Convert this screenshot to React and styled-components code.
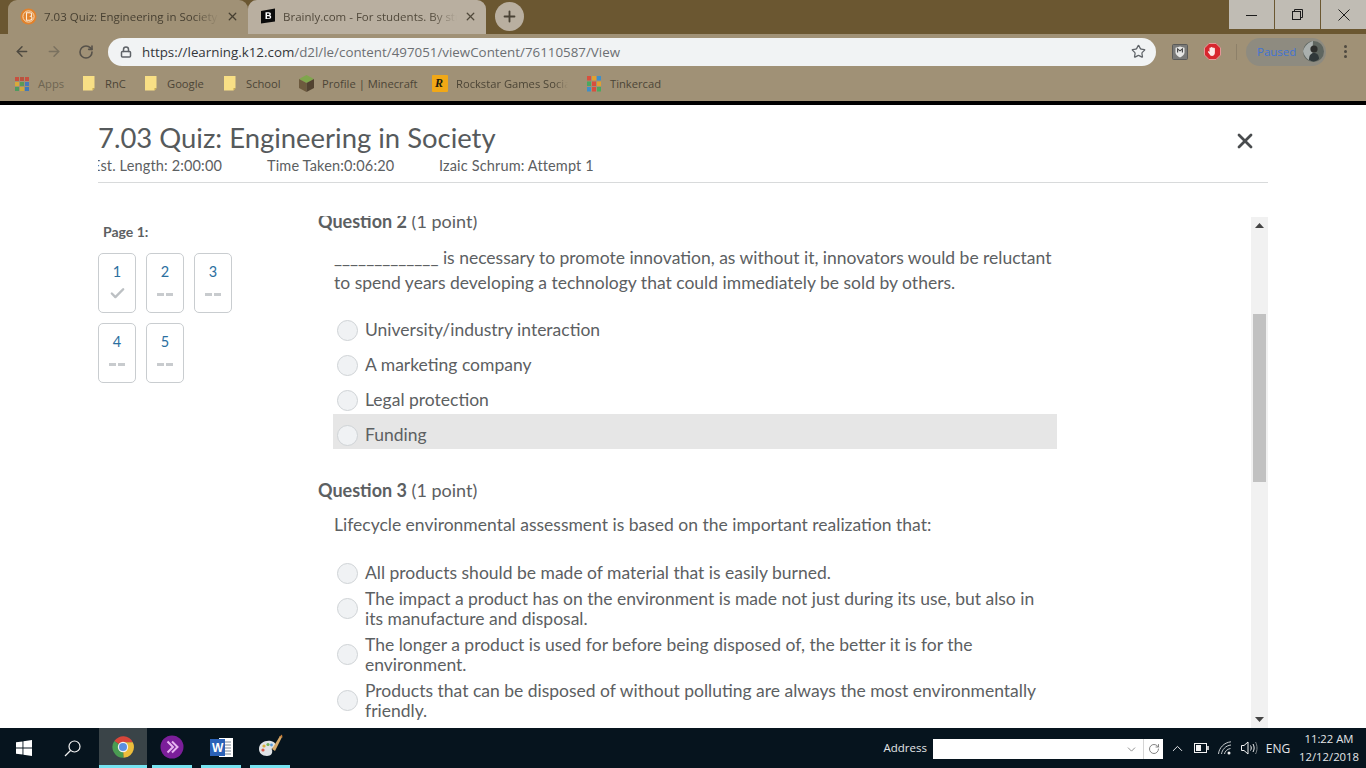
import React from "react";
import styled, { createGlobalStyle } from "styled-components";
import { ArrowLeft, ArrowRight, RotateCw, Lock, Star, X, Plus, ChevronDown, ChevronUp, Check } from "lucide-react";

const GlobalStyle = createGlobalStyle`
  html, body {
    margin: 0;
    padding: 0;
    background: #fff;
    overflow: hidden;
  }
  * { box-sizing: border-box; }
`;

const Screen = styled.div`
  width: 1366px;
  height: 768px;
  display: flex;
  flex-direction: column;
  overflow: hidden;
  font-family: "Lato", "Open Sans", sans-serif;
`;

/* browser chrome */
const TitleBar = styled.div`
  height: 34px;
  flex: none;
  display: flex;
  align-items: flex-start;
  background: #6b5731;
  padding-left: 8px;
`;

const Tab = styled.div`
  width: ${(p) => p.$width}px;
  height: 34px;
  display: flex;
  align-items: center;
  padding: 0 9px 2px 12px;
  gap: 7px;
  border-radius: 9px 9px 0 0;
  background: ${(p) => (p.$active ? "#a09176" : "#b9afa0")};
  font-family: "Open Sans", sans-serif;
  font-size: 11.5px;
  color: ${(p) => (p.$active ? "#463f31" : "#51493b")};
`;

const TabTitle = styled.span`
  flex: 1;
  white-space: nowrap;
  overflow: hidden;
  -webkit-mask-image: linear-gradient(to right, #000 85%, transparent 100%);
  mask-image: linear-gradient(to right, #000 85%, transparent 100%);
`;

const NewTab = styled.div`
  width: 29px;
  height: 29px;
  margin: 2px 0 0 9px;
  border-radius: 50%;
  background: #b9afa0;
  display: flex;
  align-items: center;
  justify-content: center;
  color: #4a4336;
`;

const WindowControls = styled.div`
  margin-left: auto;
  display: flex;
  gap: 1px;
`;

const WindowButton = styled.div`
  width: 45px;
  height: 29px;
  background: #c0bcb4;
  display: flex;
  align-items: center;
  justify-content: center;
  color: #1c1c1c;
`;

const Toolbar = styled.div`
  height: 34px;
  flex: none;
  display: flex;
  align-items: center;
  background: #a09176;
  padding: 1px 0 0 14px;
`;

const NavButton = styled.div`
  width: 16px;
  display: flex;
  justify-content: center;
  margin-right: 16px;
  color: ${(p) => p.$color};
`;

const AddressBar = styled.div`
  width: 1048px;
  height: 28px;
  margin-left: -2px;
  display: flex;
  align-items: center;
  padding: 0 10px 0 12px;
  border-radius: 14px;
  background: #f1f3f4;
  color: #5f6368;
`;

const Url = styled.div`
  flex: 1;
  margin-left: 10px;
  font-family: "Open Sans", sans-serif;
  font-size: 13.35px;
  color: #6c6f73;
  white-space: nowrap;
`;

const UrlHost = styled.span`
  color: #33363a;
`;

const ExtensionIcon = styled.svg`
  flex: none;
  margin-left: ${(p) => p.$left}px;
`;

const Divider = styled.div`
  width: 1px;
  height: 16px;
  margin-left: 15px;
  background: #8d8069;
`;

const PausedPill = styled.div`
  width: 80px;
  height: 28px;
  margin-left: 9px;
  display: flex;
  align-items: center;
  justify-content: space-between;
  padding: 0 2px 0 11px;
  border-radius: 14px;
  background: #8e8b80;
  font-family: "Open Sans", sans-serif;
  font-size: 11.5px;
  color: #4273d2;
`;

const MenuDots = styled.div`
  margin-left: 18px;
  display: flex;
  flex-direction: column;
  gap: 2px;
`;

const MenuDot = styled.span`
  width: 3px;
  height: 3px;
  border-radius: 50%;
  background: #4f4a40;
`;

const BookmarkBar = styled.div`
  height: 33px;
  flex: none;
  display: flex;
  align-items: center;
  padding: 0 0 2px 15px;
  background: #a09176;
  font-family: "Open Sans", sans-serif;
  font-size: 11.2px;
  color: #4c4536;
`;

const Bookmark = styled.div`
  flex: none;
  width: ${(p) => p.$width}px;
  display: flex;
  align-items: center;
  gap: ${(p) => p.$gap || 9}px;
  white-space: nowrap;
  color: ${(p) => p.$color || "inherit"};
`;

const FadedLabel = styled.span`
  width: 112px;
  overflow: hidden;
  -webkit-mask-image: linear-gradient(to right, #000 88%, transparent 100%);
  mask-image: linear-gradient(to right, #000 88%, transparent 100%);
`;

const BlackRule = styled.div`
  height: 4px;
  flex: none;
  background: #000;
`;

/* quiz page */
const Page = styled.main`
  flex: 1;
  min-height: 0;
  padding: 0 98px;
  display: flex;
  flex-direction: column;
  background: #fff;
  color: #5c6062;
`;

const QuizHeader = styled.header`
  flex: none;
  padding: 16px 0 6px;
  border-bottom: 1px solid #d8dadb;
`;

const TitleRow = styled.div`
  display: flex;
  align-items: center;
  justify-content: space-between;
  padding-right: 11px;
`;

const QuizTitle = styled.h1`
  margin: 0;
  font-size: 27.45px;
  line-height: 34px;
  font-weight: 400;
  color: #565a5c;
`;

const CloseIcon = styled(X)`
  color: #494c4e;
  margin-top: 6px;
`;

const MetaRow = styled.div`
  display: flex;
  margin-top: 1px;
  overflow: hidden;
  font-size: 14.5px;
  line-height: 20px;
  letter-spacing: 0.15px;
`;

const MetaItem = styled.span`
  flex: none;
  width: ${(p) => p.$width}px;
  margin-left: ${(p) => p.$left || 0}px;
  white-space: nowrap;
`;

const Body = styled.div`
  flex: 1;
  min-height: 0;
  margin-top: 34px;
  display: grid;
  grid-template-columns: 220px 933px 17px;
`;

const Sidebar = styled.aside`
  padding-top: 5px;
`;

const PageLabel = styled.div`
  padding-left: 5px;
  margin-bottom: 11px;
  font-size: 14px;
  line-height: 20px;
  font-weight: 700;
`;

const TileGrid = styled.div`
  display: grid;
  grid-template-columns: repeat(3, 38px);
  gap: 10px;
`;

const Tile = styled.div`
  height: 60px;
  padding-top: 9px;
  display: flex;
  flex-direction: column;
  align-items: center;
  border: 1px solid #c9cdd0;
  border-radius: 5px;
`;

const TileNumber = styled.span`
  font-size: 14.5px;
  line-height: 17px;
  color: #2b6f9f;
`;

const TileDashes = styled.span`
  margin-top: 13px;
  display: flex;
  gap: 2px;
`;

const TileDash = styled.span`
  flex: none;
  width: 7px;
  height: 3px;
  background: #c8cbce;
`;

const TileCheck = styled(Check)`
  margin-top: 5px;
  color: #bcc0c3;
`;

const Questions = styled.section`
  margin-top: -1px;
  overflow: hidden;
`;

const QuestionBlock = styled.div`
  margin-top: ${(p) => p.$top}px;
`;

const QuestionHeading = styled.h2`
  margin: 0;
  font-size: 18px;
  line-height: 24px;
  font-weight: 400;
`;

const HeadingStrong = styled.strong`
  font-weight: 700;
`;

const Prompt = styled.p`
  margin: ${(p) => p.$top}px 0 0;
  padding-left: 16px;
  width: 740px;
  font-size: 17.5px;
  line-height: 25px;
`;

const OptionList = styled.div`
  margin-top: ${(p) => p.$top}px;
  margin-left: 15px;
  width: 724px;
  display: flex;
  flex-direction: column;
`;

const OptionRow = styled.div`
  display: flex;
  align-items: center;
  gap: 7px;
  padding: ${(p) => (p.$wrap ? "2px 20px 4px 4px" : "7px 20px 0 4px")};
  min-height: 35px;
  background: ${(p) => (p.$hover ? "#e6e6e6" : "transparent")};
  font-size: 17.5px;
  line-height: 20px;
`;

const Radio = styled.span`
  flex: none;
  width: 21px;
  height: 21px;
  margin-top: ${(p) => (p.$wrap ? -2 : 0)}px;
  border-radius: 50%;
  border: 1px solid #cfd3d6;
  background: #f0f2f4;
`;

const ScrollTrack = styled.div`
  display: flex;
  flex-direction: column;
  align-items: center;
  background: #f1f1f1;
  color: #444;
`;

const ScrollArrow = styled.div`
  flex: none;
  height: 17px;
  margin-top: ${(p) => (p.$auto ? "auto" : "0")};
  display: flex;
  align-items: center;
  justify-content: center;
`;

const ScrollThumb = styled.div`
  flex: none;
  width: 13px;
  height: 168px;
  margin-top: 80px;
  background: #c1c1c1;
`;

/* windows taskbar */
const Taskbar = styled.footer`
  height: 40px;
  flex: none;
  display: flex;
  align-items: stretch;
  background: #06141e;
  color: #e4e6e8;
  font-family: "Open Sans", sans-serif;
`;

const ShellButton = styled.div`
  width: 48px;
  display: flex;
  align-items: center;
  justify-content: center;
`;

const AppList = styled.div`
  margin-left: 3px;
  display: flex;
`;

const AppButton = styled.div`
  width: ${(p) => (p.$active ? 48 : 40)}px;
  margin-right: ${(p) => (p.$active ? 5 : 9)}px;
  display: flex;
  align-items: center;
  justify-content: center;
  padding-top: 1px;
  background: ${(p) => (p.$active ? "#3a4448" : "transparent")};
  border-bottom: 3px solid #76e3f0;
`;

const AddressBand = styled.div`
  margin-left: auto;
  padding-top: 2px;
  display: flex;
  align-items: center;
  gap: 6px;
  font-size: 11.5px;
`;

const AddressLabel = styled.span`
  margin-bottom: 3px;
`;

const AddressInput = styled.div`
  width: 230px;
  height: 20px;
  display: flex;
  align-items: center;
  justify-content: flex-end;
  background: #fff;
  color: #777;
`;

const AddressGo = styled.span`
  width: 20px;
  height: 20px;
  margin-left: 5px;
  display: flex;
  align-items: center;
  justify-content: center;
  border-left: 1px solid #d5d5d5;
`;

const Tray = styled.div`
  display: flex;
  align-items: center;
  margin-left: 2px;
`;

const TrayCell = styled.div`
  width: ${(p) => p.$width || 24}px;
  display: flex;
  justify-content: center;
  font-size: 12px;
`;

const Clock = styled.div`
  width: 68px;
  display: flex;
  flex-direction: column;
  align-items: center;
  justify-content: center;
  font-size: 11.3px;
  line-height: 18px;
  margin-right: 3px;
`;

const D2lIcon = () => (
  <svg width="17" height="17" viewBox="0 0 17 17">
    <circle cx="8.5" cy="8.5" r="8" fill="#e2822c" />
    <circle cx="8.5" cy="8.5" r="5.6" fill="none" stroke="#f7dcb8" strokeWidth="1" />
    <path d="M6.5 4.8h3c1.6 0 2.2 1 2.2 1.9 0 .8-.4 1.3-1 1.6.8.2 1.3.9 1.3 1.8 0 1.2-.9 2.1-2.4 2.1H6.5z" fill="none" stroke="#fbeedd" strokeWidth="1.1" />
  </svg>
);

const BrainlyIcon = () => (
  <svg width="16" height="16" viewBox="0 0 16 16">
    <path d="M1 3l14-2.5v13L1 15.5z" fill="#0b0b0b" />
    <path d="M5.5 4.2h3.4c1.4 0 2 .8 2 1.7 0 .7-.4 1.2-1 1.4.8.2 1.3.8 1.3 1.7 0 1.2-.8 2-2.3 2H5.5zM7 5.4v1.6h1.5c.6 0 .9-.3.9-.8s-.3-.8-.9-.8zm0 2.8v2h1.7c.7 0 1-.4 1-1s-.3-1-1-1z" fill="#fff" />
  </svg>
);

const AppsIcon = () => (
  <svg width="14" height="14" viewBox="0 0 14 14">
    {[
      ["#c8503f", "#b8543f", "#c8503f"],
      ["#d9a93a", "#5a9a58", "#4a78b8"],
      ["#4f9a5f", "#d0a83a", "#3f78b8"],
    ].map((row, r) =>
      row.map((fill, c) => <rect key={`${r}${c}`} x={c * 5} y={r * 5} width="4" height="4" fill={fill} />)
    )}
  </svg>
);

const FolderIcon = () => (
  <svg width="12" height="15" viewBox="0 0 12 15">
    <path d="M0 0h11.5v12l-2 2.5H0z" fill="#f8df85" />
    <path d="M9.5 14.5v-2.5h2z" fill="#c7a94f" />
  </svg>
);

const MinecraftIcon = () => (
  <svg width="15" height="17" viewBox="0 0 15 17">
    <path d="M7.5 0L15 4 7.5 8 0 4z" fill="#7fa64c" />
    <path d="M0 4l7.5 4v9L0 13z" fill="#6d5a3e" />
    <path d="M15 4L7.5 8v9L15 13z" fill="#514230" />
  </svg>
);

const RockstarIcon = () => (
  <svg width="16" height="17" viewBox="0 0 16 17">
    <rect width="16" height="17" rx="1" fill="#f1a817" />
    <text x="3" y="12" fontFamily="Liberation Serif, serif" fontWeight="700" fontStyle="italic" fontSize="12" fill="#211a0c">R</text>
  </svg>
);

const TinkercadIcon = () => (
  <svg width="14" height="16" viewBox="0 0 14 16">
    {["#d94f3d", "#e0a030", "#3f8fc8", "#4aa85f", "#d94f3d", "#e0a030", "#3f8fc8", "#d94f3d", "#4aa85f"].map((fill, i) => (
      <rect key={i} x={(i % 3) * 5} y={Math.floor(i / 3) * 5.5} width="4" height="4.5" fill={fill} />
    ))}
  </svg>
);

const ShieldExtension = () => (
  <ExtensionIcon width="16" height="16" viewBox="0 0 16 16" $left={16}>
    <rect x=".5" y=".5" width="15" height="15" rx="1" fill="#7a7a78" stroke="#5a5a58" />
    <path d="M8 2.5l4.5 1.2v4.5c0 2.4-2 4-4.5 5.3-2.5-1.3-4.5-2.9-4.5-5.3V3.7z" fill="#e6e6e4" />
    <path d="M5.6 8.4V4.8l2.4 2 2.4-2v3.6" fill="none" stroke="#444" strokeWidth="1.1" />
  </ExtensionIcon>
);

const StopExtension = () => (
  <ExtensionIcon width="17" height="17" viewBox="0 0 17 17" $left={16}>
    <path d="M5 .5h7L16.5 5v7L12 16.5H5L.5 12V5z" fill="#d7262e" stroke="#f1a5a8" strokeWidth=".8" />
    <path d="M5.5 9V5.3c0-1 1.2-1 1.2 0-.1-1.8 1.5-1.8 1.5-.2 0-1.3 1.5-1.2 1.5.2 0-.7 1.2-.7 1.2.3v4c0 2-1.2 3.4-2.9 3.4-1.4 0-2-.8-2.6-2L4 9.2c-.4-.9.7-1.3 1.2-.5z" fill="#fbe9e9" />
  </ExtensionIcon>
);

const Avatar = () => (
  <svg width="21" height="21" viewBox="0 0 21 21">
    <circle cx="10.5" cy="10.5" r="10.5" fill="#5f6660" />
    <path d="M0 10C2 4 6 1 10 0l-1 20C4 19 1 15 0 10z" fill="#aab0ae" />
    <circle cx="11" cy="8" r="3.6" fill="#2d2e2c" />
    <path d="M6 19c0-5 2-7 5-7s5 2 5 6c-3 3-7 3-10 1z" fill="#30383a" />
  </svg>
);

const WindowsLogo = () => (
  <svg width="16" height="16" viewBox="0 0 16 16" fill="#fff">
    <path d="M0 2.3l6.5-.9v6.2H0zM7.4 1.3L16 0v7.6H7.4zM0 8.4h6.5v6.2L0 13.7zM7.4 8.4H16V16l-8.6-1.3z" />
  </svg>
);

const SearchGlyph = () => (
  <svg width="17" height="17" viewBox="0 0 17 17" fill="none" stroke="#f2f2f2" strokeWidth="1.2">
    <circle cx="10.5" cy="6.5" r="5.5" />
    <path d="M6.5 10.5L1 16" />
  </svg>
);

const ChromeLogo = () => (
  <svg width="24" height="24" viewBox="0 0 24 24">
    <path d="M12 12L3.3 6A10.8 10.8 0 0 1 21.8 7.2H12z" fill="#d8463a" />
    <path d="M12 12L12.6 22.8A10.8 10.8 0 0 1 3.3 6z" fill="#4a9c52" />
    <path d="M12 12V7.2h9.8A10.8 10.8 0 0 1 12.6 22.8z" fill="#edbd3b" />
    <circle cx="12" cy="12" r="5.2" fill="#f2f2f2" />
    <circle cx="12" cy="12" r="4" fill="#5b8fe0" />
  </svg>
);

const PurpleApp = () => (
  <svg width="24" height="24" viewBox="0 0 24 24" fill="none">
    <circle cx="12" cy="12" r="11.5" fill="#7b1e9a" />
    <path d="M7.5 6.5L13 12l-5.5 5.5M12 6.5l5.5 5.5-5.5 5.5" stroke="#e7b4f0" strokeWidth="2" />
  </svg>
);

const WordLogo = () => (
  <svg width="23" height="21" viewBox="0 0 23 21">
    <rect x="9" y="1" width="14" height="19" fill="#fff" />
    <path d="M12 5h9M12 8h9M12 11h9M12 14h9M12 17h9" stroke="#7a8796" strokeWidth="1" />
    <rect y="2" width="15" height="17" fill="#2b62b8" />
    <text x="2" y="15" fontFamily="Liberation Sans, sans-serif" fontWeight="700" fontSize="12" fill="#fff">W</text>
  </svg>
);

const PaintLogo = () => (
  <svg width="26" height="26" viewBox="0 0 26 26">
    <path d="M2 15c0-6 6-9 12-8 4 1 6 4 4 6-2 1-4 1-3 3 1 3-1 6-5 6-5 0-8-3-8-7z" fill="#dfe3e6" />
    <circle cx="7" cy="12" r="1.6" fill="#d9b13a" />
    <circle cx="11" cy="10.5" r="1.6" fill="#6fb05a" />
    <circle cx="6" cy="16" r="1.6" fill="#d65a4a" />
    <circle cx="14.5" cy="11" r="1.4" fill="#5a9ad6" />
    <path d="M15 15L23 2l2 1-7 14z" fill="#d6a96a" />
    <path d="M22 3l3-2.5 .5 3z" fill="#c8803a" />
  </svg>
);

const BatteryGlyph = () => (
  <svg width="15" height="10" viewBox="0 0 15 10" fill="none" stroke="#f2f2f2">
    <rect x=".5" y=".5" width="12" height="9" />
    <rect x="2" y="2" width="5" height="6" fill="#f2f2f2" stroke="none" />
    <path d="M14 3v4" strokeWidth="1.6" />
  </svg>
);

const WifiGlyph = () => (
  <svg width="14" height="14" viewBox="0 0 14 14" fill="none" stroke="#c8ccce">
    <path d="M.5 13C1 7 6 1.5 13 .8M3.5 13C4 9 7.5 4.5 13 4M6.5 13c.3-2.3 2.5-5 6-5.5" />
    <circle cx="11" cy="12" r="1.5" fill="#f2f2f2" stroke="none" />
  </svg>
);

const VolumeGlyph = () => (
  <svg width="17" height="14" viewBox="0 0 17 14" fill="none" stroke="#f2f2f2">
    <path d="M.5 4.5H3L7 1v12L3 9.5H.5z" />
    <path d="M9.5 4.5c1 1.5 1 3.5 0 5M12 3c1.5 2.5 1.5 5.5 0 8" />
    <path d="M14.5 1c2 3.5 2 8.5 0 12" stroke="#81878a" />
  </svg>
);

const TileItem = ({ number, done }) => (
  <Tile>
    <TileNumber>{number}</TileNumber>
    {done ? (
      <TileCheck size={17} strokeWidth={3.4} />
    ) : (
      <TileDashes>
        <TileDash />
        <TileDash />
      </TileDashes>
    )}
  </Tile>
);

const Option = ({ children, wrap, hover }) => (
  <OptionRow $wrap={wrap} $hover={hover}>
    <Radio $wrap={wrap} />
    <span>{children}</span>
  </OptionRow>
);

export default function App() {
  return (
    <>
      <GlobalStyle />
      <Screen>
        <TitleBar>
          <Tab $active $width={240}>
            <D2lIcon />
            <TabTitle>7.03 Quiz: Engineering in Society</TabTitle>
            <X size={13} strokeWidth={2.4} />
          </Tab>
          <Tab $width={238}>
            <BrainlyIcon />
            <TabTitle>Brainly.com - For students. By students.</TabTitle>
            <X size={13} strokeWidth={2.4} />
          </Tab>
          <NewTab>
            <Plus size={17} strokeWidth={2.6} />
          </NewTab>
          <WindowControls>
            <WindowButton>
              <svg width="11" height="11" viewBox="0 0 11 11" fill="none" stroke="#1c1c1c">
                <path d="M0 6.5h11" />
              </svg>
            </WindowButton>
            <WindowButton>
              <svg width="11" height="11" viewBox="0 0 11 11" fill="none" stroke="#1c1c1c">
                <rect x=".5" y="2.5" width="8" height="8" />
                <path d="M2.5 2.5v-2h8v8h-2" />
              </svg>
            </WindowButton>
            <WindowButton>
              <svg width="12" height="12" viewBox="0 0 12 12" fill="none" stroke="#1c1c1c">
                <path d="M.5.5l11 11M11.5.5l-11 11" />
              </svg>
            </WindowButton>
          </WindowControls>
        </TitleBar>

        <Toolbar>
          <NavButton $color="#4e4a40">
            <ArrowLeft size={19} strokeWidth={2.2} />
          </NavButton>
          <NavButton $color="#7a715f">
            <ArrowRight size={19} strokeWidth={2.2} />
          </NavButton>
          <NavButton $color="#57524a">
            <RotateCw size={16} strokeWidth={2.4} />
          </NavButton>
          <AddressBar>
            <Lock size={12} strokeWidth={3} />
            <Url>
              <UrlHost>https://learning.k12.com</UrlHost>/d2l/le/content/497051/viewContent/76110587/View
            </Url>
            <Star size={15} strokeWidth={2} />
          </AddressBar>
          <ShieldExtension />
          <StopExtension />
          <Divider />
          <PausedPill>
            Paused
            <Avatar />
          </PausedPill>
          <MenuDots>
            <MenuDot />
            <MenuDot />
            <MenuDot />
          </MenuDots>
        </Toolbar>

        <BookmarkBar>
          <Bookmark $width={68} $color="#6e6552">
            <AppsIcon />
            Apps
          </Bookmark>
          <Bookmark $width={62} $gap={10}>
            <FolderIcon />
            RnC
          </Bookmark>
          <Bookmark $width={79} $gap={10}>
            <FolderIcon />
            Google
          </Bookmark>
          <Bookmark $width={75} $gap={10}>
            <FolderIcon />
            School
          </Bookmark>
          <Bookmark $width={133} $gap={8}>
            <MinecraftIcon />
            Profile | Minecraft
          </Bookmark>
          <Bookmark $width={155} $gap={8}>
            <RockstarIcon />
            <FadedLabel>Rockstar Games Social Club</FadedLabel>
          </Bookmark>
          <Bookmark $width={80}>
            <TinkercadIcon />
            Tinkercad
          </Bookmark>
        </BookmarkBar>
        <BlackRule />

        <Page>
          <QuizHeader>
            <TitleRow>
              <QuizTitle>7.03 Quiz: Engineering in Society</QuizTitle>
              <CloseIcon size={24} strokeWidth={2.8} />
            </TitleRow>
            <MetaRow>
              <MetaItem $left={-6} $width={175}>Est. Length: 2:00:00</MetaItem>
              <MetaItem $width={172}>Time Taken:0:06:20</MetaItem>
              <MetaItem $width={200}>Izaic Schrum: Attempt 1</MetaItem>
            </MetaRow>
          </QuizHeader>

          <Body>
            <Sidebar>
              <PageLabel>Page 1:</PageLabel>
              <TileGrid>
                <TileItem number={1} done />
                <TileItem number={2} />
                <TileItem number={3} />
                <TileItem number={4} />
                <TileItem number={5} />
              </TileGrid>
            </Sidebar>

            <Questions>
              <QuestionBlock $top={-7}>
                <QuestionHeading>
                  <HeadingStrong>Question 2</HeadingStrong> (1 point)
                </QuestionHeading>
                <Prompt $top={12}>
                  _____________ is necessary to promote innovation, as without it, innovators would be reluctant to
                  spend years developing a technology that could immediately be sold by others.
                </Prompt>
                <OptionList $top={14}>
                  <Option>University/industry interaction</Option>
                  <Option>A marketing company</Option>
                  <Option>Legal protection</Option>
                  <Option hover>Funding</Option>
                </OptionList>
              </QuestionBlock>

              <QuestionBlock $top={29}>
                <QuestionHeading>
                  <HeadingStrong>Question 3</HeadingStrong> (1 point)
                </QuestionHeading>
                <Prompt $top={10}>Lifecycle environmental assessment is based on the important realization that:</Prompt>
                <OptionList $top={15}>
                  <Option>All products should be made of material that is easily burned.</Option>
                  <Option wrap>
                    The impact a product has on the environment is made not just during its use, but also in its
                    manufacture and disposal.
                  </Option>
                  <Option wrap>
                    The longer a product is used for before being disposed of, the better it is for the environment.
                  </Option>
                  <Option wrap>
                    Products that can be disposed of without polluting are always the most environmentally friendly.
                  </Option>
                </OptionList>
              </QuestionBlock>
            </Questions>

            <ScrollTrack>
              <ScrollArrow>
                <svg width="9" height="5" viewBox="0 0 9 5" fill="#444">
                  <path d="M4.5 0L9 5H0z" />
                </svg>
              </ScrollArrow>
              <ScrollThumb />
              <ScrollArrow $auto>
                <svg width="9" height="5" viewBox="0 0 9 5" fill="#444">
                  <path d="M0 0h9L4.5 5z" />
                </svg>
              </ScrollArrow>
            </ScrollTrack>
          </Body>
        </Page>

        <Taskbar>
          <ShellButton>
            <WindowsLogo />
          </ShellButton>
          <ShellButton>
            <SearchGlyph />
          </ShellButton>
          <AppList>
            <AppButton $active>
              <ChromeLogo />
            </AppButton>
            <AppButton>
              <PurpleApp />
            </AppButton>
            <AppButton>
              <WordLogo />
            </AppButton>
            <AppButton>
              <PaintLogo />
            </AppButton>
          </AppList>
          <AddressBand>
            <AddressLabel>Address</AddressLabel>
            <AddressInput>
              <ChevronDown size={13} strokeWidth={1.5} />
              <AddressGo>
                <RotateCw size={12} strokeWidth={1.8} />
              </AddressGo>
            </AddressInput>
          </AddressBand>
          <Tray>
            <TrayCell>
              <ChevronUp size={17} strokeWidth={1.4} />
            </TrayCell>
            <TrayCell>
              <BatteryGlyph />
            </TrayCell>
            <TrayCell>
              <WifiGlyph />
            </TrayCell>
            <TrayCell>
              <VolumeGlyph />
            </TrayCell>
            <TrayCell $width={34}>ENG</TrayCell>
          </Tray>
          <Clock>
            <span>11:22 AM</span>
            <span>12/12/2018</span>
          </Clock>
        </Taskbar>
      </Screen>
    </>
  );
}
